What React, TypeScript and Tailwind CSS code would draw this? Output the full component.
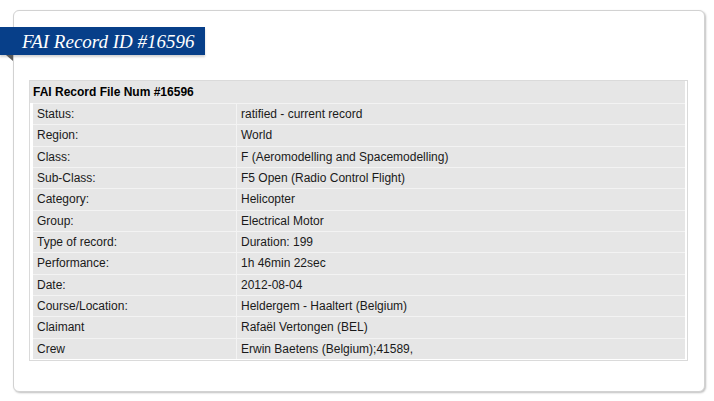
import React from 'react';

const rows: [string, string][] = [
  ['Status:', 'ratified - current record'],
  ['Region:', 'World'],
  ['Class:', 'F (Aeromodelling and Spacemodelling)'],
  ['Sub-Class:', 'F5 Open (Radio Control Flight)'],
  ['Category:', 'Helicopter'],
  ['Group:', 'Electrical Motor'],
  ['Type of record:', 'Duration: 199'],
  ['Performance:', '1h 46min 22sec'],
  ['Date:', '2012-08-04'],
  ['Course/Location:', 'Heldergem - Haaltert (Belgium)'],
  ['Claimant', 'Rafaël Vertongen (BEL)'],
  ['Crew', 'Erwin Baetens (Belgium);41589,'],
];

const App: React.FC = () => {
  return (
    <div className="w-[714px] h-[401px] bg-white pt-[10px] pl-[13px] font-['Liberation_Sans',Arial,sans-serif]">
      {/* Card */}
      <div className="w-[692px] h-[382px] bg-white border border-[#d2d2d2] rounded-[6px] shadow-[1px_1px_2px_rgba(0,0,0,0.25)]">
        {/* Ribbon title */}
        <div className="relative -ml-[14px] mt-[16px] w-[205px]">
          <div className="h-[28px] bg-[#073f89] flex items-center pl-[22px] shadow-[0_2px_2px_rgba(0,0,0,0.18)]">
            <span className="text-white italic text-[19px] leading-none font-['Liberation_Serif',Georgia,serif]">
              FAI Record ID #16596
            </span>
          </div>
          <div className="absolute left-[6px] top-[28px] w-0 h-0 border-t-[6px] border-t-[#5a5a5a] border-l-[7px] border-l-transparent" />
        </div>

        {/* Record table */}
        <div className="ml-[15px] mr-[16px] mt-[25px] border border-[#dadada] bg-white pb-[1px]">
          <div className="mr-[2px] h-[22px] bg-[#e6e6e6] flex items-center pl-[3px] text-[12px] font-bold text-black">
            FAI Record File Num #16596
          </div>
          <div className="mr-[2px] ml-[3px]">
            {rows.map(([k, v]) => (
              <div key={k} className="flex h-[21.33px] border-t border-[#f3f3f3] bg-[#e6e6e6] text-[12px] text-[#1a1a1a]">
                <div className="w-[204px] flex items-center pl-[4px] border-r border-[#f3f3f3]">{k}</div>
                <div className="flex-1 flex items-center pl-[4px]">{v}</div>
              </div>
            ))}
          </div>
        </div>
      </div>
    </div>
  );
};

export default App;
